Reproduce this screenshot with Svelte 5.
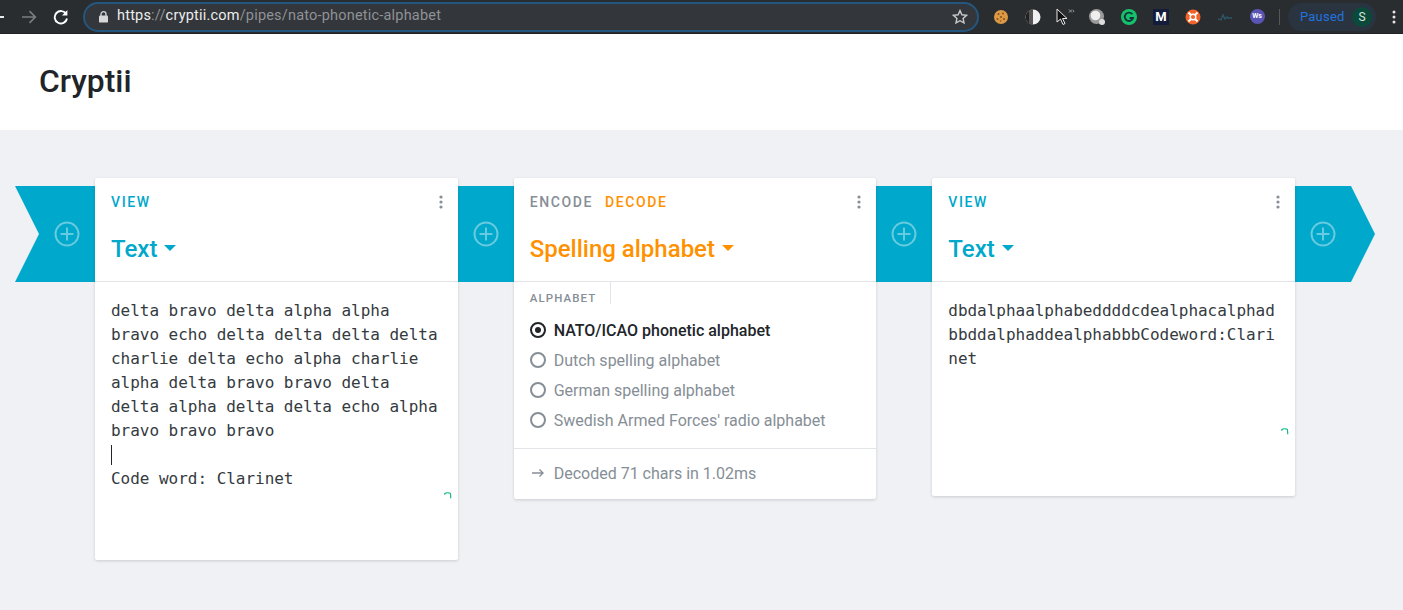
<script>
  const leftLines = [
    'delta bravo delta alpha alpha',
    'bravo echo delta delta delta delta',
    'charlie delta echo alpha charlie',
    'alpha delta bravo bravo delta',
    'delta alpha delta delta echo alpha',
    'bravo bravo bravo'
  ];
  const rightText = 'dbdalphaalphabeddddcdealphacalphadbbddalphaddealphabbbCodeword:Clarinet';
  const alphabets = [
    "Dutch spelling alphabet",
    "German spelling alphabet",
    "Swedish Armed Forces' radio alphabet"
  ];
</script>

{#snippet plus()}
  <svg class="plus" width="26" height="26" viewBox="0 0 26 26" fill="none" stroke="#fff" stroke-opacity=".4" stroke-width="2">
    <circle cx="13" cy="13" r="11.5" />
    <path d="M13 6.5v13M6.5 13h13" />
  </svg>
{/snippet}

{#snippet dots()}
  <svg class="dots" width="4" height="14" viewBox="0 0 4 14" fill="#868e96">
    <circle cx="2" cy="2" r="1.6" /><circle cx="2" cy="7" r="1.6" /><circle cx="2" cy="12" r="1.6" />
  </svg>
{/snippet}

{#snippet spinner()}
  <svg class="spinner" width="8" height="8" viewBox="0 0 8 8" fill="none" stroke="#12b886" stroke-width="1.200">
    <path d="M.8 2.800V1.500C1.800.8 4.800.6 6.200 1.200c.5.4.5 1 .5 5" />
  </svg>
{/snippet}

<div class="toolbar">
  <svg class="nav" width="14" height="14" viewBox="0 0 14 14" fill="none" stroke="#fff" stroke-width="1.8"><path d="M-6 7h10" /></svg>
  <svg class="nav fwd" width="16" height="14" viewBox="0 0 16 14" fill="none" stroke="#7b7d80" stroke-width="1.7"><path d="M1 7h13M8.5 1.2 14.3 7l-5.8 5.8" /></svg>
  <svg class="nav reload" width="16" height="16" viewBox="0 0 16 16" fill="none" stroke="#fff" stroke-width="1.9"><path d="M13.3 5.2A6.2 6.2 0 1 0 14 9.5" /><path d="M14.4 1v5.4H9z" fill="#fff" stroke="none" /></svg>
  <div class="omnibox">
    <svg width="9" height="12" viewBox="0 0 9 12" fill="#d5d6d7"><rect y="4.6" width="9" height="7" rx="1.2" /><path d="M2 5V3.2a2.5 2.5 0 0 1 5 0V5" fill="none" stroke="#d5d6d7" stroke-width="1.3" /></svg>
    <span class="url"><b>https</b><i>://</i><b>cryptii.com</b><i>/pipes/nato-phonetic-alphabet</i></span>
    <svg class="star" width="16" height="16" viewBox="0 0 16 16" fill="none" stroke="#c8c9ca" stroke-width="1.4"><path d="M8 1.6l1.9 4.2 4.6.5-3.4 3.1.9 4.5L8 11.7l-4 2.2.9-4.5L1.500 6.300l4.600-.5z" /></svg>
  </div>
  <div class="extensions">
    <span class="ext"><svg width="16" height="16" viewBox="0 0 16 16"><circle cx="8" cy="8" r="7" fill="#dd9a45" /><g fill="#8a5320"><circle cx="5.500" cy="5" r="1.100" /><circle cx="10" cy="4.500" r="1" /><circle cx="8" cy="8" r="1.100" /><circle cx="4.500" cy="10" r="1" /><circle cx="11" cy="10" r="1.100" /><circle cx="7.500" cy="12" r=".8" /></g></svg></span>
    <span class="ext"><svg width="16" height="16" viewBox="0 0 16 16"><circle cx="8" cy="8" r="7.500" fill="#f1f1f1" /><path d="M8 .5a7.500 7.500 0 0 0 0 15z" fill="#222" /><path d="M8 .5a7.500 7.500 0 0 0-4 1.200v12.600a7.500 7.500 0 0 0 4 1.200z" fill="#555" /></svg></span>
    <span class="ext cursor"><svg width="20" height="18" viewBox="0 0 20 18" fill="#111" stroke="#e8e8e8" stroke-width="1"><path d="M2 1v13l3.500-3 2.500 5.500 2-1-2.500-5H12z" /><path d="M14 1.500l3 3M17 1.500l-3 3M18 2l1 2" stroke="#999" fill="none" /></svg></span>
    <span class="ext"><svg width="16" height="16" viewBox="0 0 16 16"><circle cx="7.500" cy="7.500" r="7.500" fill="#9a9a9a" /><circle cx="6.500" cy="6.500" r="4.800" fill="#eee" /><circle cx="13" cy="13" r="3" fill="#ddd" /></svg></span>
    <span class="ext"><svg width="16" height="16" viewBox="0 0 16 16"><circle cx="8" cy="8" r="8" fill="#15c26b" /><path d="M11.300 5.200A4.200 4.200 0 1 0 12 9H8.600" fill="none" stroke="#10343a" stroke-width="1.900" /></svg></span>
    <span class="ext"><span class="medium">M</span></span>
    <span class="ext"><svg width="16" height="16" viewBox="0 0 16 16"><circle cx="8" cy="8" r="7.500" fill="#f2632b" /><circle cx="8" cy="8" r="2.800" fill="none" stroke="#fff" stroke-width="1.400" /><path d="M3.500 3.500l2.500 2.500M12.500 3.500 10 6M3.500 12.500 6 10M12.500 12.500 10 10" stroke="#fff" stroke-width="2" /></svg></span>
    <span class="ext"><svg width="14" height="10" viewBox="0 0 14 10" fill="none" stroke="#2c5666" stroke-width="1.400"><path d="M0 7l3 1 2-5 2 4 2-2 1 1h4" /></svg></span>
    <span class="ext"><span class="ws">Ws</span></span>
  </div>
  <span class="divider"></span>
  <div class="paused">
    <span>Paused</span>
    <span class="avatar">S</span>
  </div>
  <svg class="kebab" width="4" height="14" viewBox="0 0 4 14" fill="#e6e6e6"><circle cx="2" cy="2" r="1.500" /><circle cx="2" cy="7" r="1.500" /><circle cx="2" cy="12" r="1.500" /></svg>
</div>

<header class="site-header">
  <h1>Cryptii</h1>
</header>

<main class="pipe">
  <div class="connector first">{@render plus()}</div>

  <section class="card text-card tall">
    <div class="card-head">
      <div class="tabs"><span class="tab teal">View</span>{@render dots()}</div>
      <div class="title teal">Text <span class="caret"></span></div>
    </div>
    <div class="editor">
      {#each leftLines as line}
        <div>{line}</div>
      {/each}
      <div class="blank"><span class="text-cursor"></span></div>
      <div>Code word: Clarinet</div>
    </div>
    {@render spinner()}
  </section>

  <div class="connector">{@render plus()}</div>

  <section class="card middle">
    <div class="card-head">
      <div class="tabs">
        <span class="tab">Encode</span><span class="tab orange">Decode</span>
        {@render dots()}
      </div>
      <div class="title orange">Spelling alphabet <span class="caret"></span></div>
    </div>
    <div class="settings">
      <div class="field-label">Alphabet</div>
      <div class="options">
        <div class="option selected"><span class="radio"></span>NATO/ICAO phonetic alphabet</div>
        {#each alphabets as name}
          <div class="option"><span class="radio"></span>{name}</div>
        {/each}
      </div>
    </div>
    <div class="status">
      <svg width="12" height="10" viewBox="0 0 12 10" fill="none" stroke="#868e96" stroke-width="1.400"><path d="M0 5h11M7.500 1.500 11 5 7.500 8.500" /></svg>
      <span>Decoded 71 chars in 1.02ms</span>
    </div>
  </section>

  <div class="connector">{@render plus()}</div>

  <section class="card text-card short">
    <div class="card-head">
      <div class="tabs"><span class="tab teal">View</span>{@render dots()}</div>
      <div class="title teal">Text <span class="caret"></span></div>
    </div>
    <div class="editor broken">{rightText}</div>
    {@render spinner()}
  </section>

  <div class="connector last">{@render plus()}</div>
</main>

<style>
  :global(body) {
    margin: 0;
    background: #eff1f5;
    font-family: Roboto, "Liberation Sans", sans-serif;
    color: #212529;
  }

  .toolbar {
    height: 33px;
    background: #2a2d30;
    border-bottom: 1px solid #1f2123;
    display: flex;
    align-items: center;
    overflow: hidden;
  }
  .nav { flex: none; }
  .fwd { margin-left: 7px; }
  .reload { margin-left: 16px; }
  .omnibox {
    flex: none;
    box-sizing: border-box;
    width: 896px;
    height: 30px;
    margin-left: 14px;
    padding: 0 9px 0 14px;
    background: #33363a;
    border: 2px solid #24577f;
    border-radius: 15px;
    display: flex;
    align-items: center;
  }
  .url {
    margin-left: 9px;
    font-size: 14.5px;
    letter-spacing: .2px;
    white-space: nowrap;
    position: relative;
    top: -1px;
  }
  .url b { font-weight: 400; color: #eceded; }
  .url i { font-style: normal; color: #8f9296; }
  .star { margin-left: auto; }
  .extensions { display: flex; margin-left: 6px; }
  .ext {
    width: 32px;
    height: 20px;
    display: flex;
    align-items: center;
    justify-content: center;
  }
  .medium {
    width: 16px;
    height: 16px;
    background: #141c3c;
    color: #fff;
    font-size: 13px;
    font-weight: 700;
    line-height: 16px;
    text-align: center;
  }
  .ws {
    width: 15px;
    height: 15px;
    border-radius: 50%;
    background: #5a55b5;
    color: #fff;
    font-size: 7px;
    font-weight: 700;
    line-height: 15px;
    text-align: center;
  }
  .divider {
    width: 1px;
    height: 16px;
    margin-left: 6px;
    background: #55585b;
  }
  .paused {
    box-sizing: border-box;
    width: 88px;
    height: 28px;
    margin-left: 8px;
    padding: 0 4px 0 12px;
    border-radius: 14px;
    background: #2a3441;
    color: #2273de;
    font-size: 13px;
    letter-spacing: .2px;
    display: flex;
    align-items: center;
    justify-content: space-between;
  }
  .avatar {
    width: 20px;
    height: 20px;
    border-radius: 50%;
    background: #0b4a3a;
    color: #d6e5df;
    font-size: 12px;
    line-height: 20px;
    text-align: center;
    letter-spacing: 0;
  }
  .kebab { margin-left: 16px; flex: none; }

  .site-header {
    height: 96px;
    background: #fff;
    padding-left: 39px;
    display: flex;
    align-items: center;
  }
  h1 {
    margin: 0;
    font-size: 31.8px;
    font-weight: 500;
    position: relative;
    top: -1px;
  }

  .pipe {
    display: flex;
    align-items: flex-start;
    padding: 48px 0 48px 15px;
    min-height: 384px;
  }
  .connector {
    flex: none;
    box-sizing: border-box;
    width: 56px;
    height: 96px;
    margin-top: 8px;
    background: #00a8cb;
    display: flex;
    align-items: center;
    justify-content: center;
  }
  .connector.first {
    width: 80px;
    padding-left: 24px;
    clip-path: polygon(0 0, 100% 0, 100% 100%, 0 100%, 24px 50%);
  }
  .connector.last {
    width: 80px;
    padding-right: 24px;
    clip-path: polygon(0 0, 56px 0, 100% 50%, 56px 100%, 0 100%);
  }

  .card {
    flex: none;
    position: relative;
    z-index: 1;
    width: 362.67px;
    background: #fff;
    border-radius: 2px;
    box-shadow: 0 1px 3px rgba(33, 37, 41, .18);
  }
  .card.tall { height: 382px; }
  .card.middle { height: 321px; display: flex; flex-direction: column; }
  .card.short { height: 318px; }

  .card-head {
    box-sizing: border-box;
    height: 104px;
    padding: 16px 16px 0;
    border-bottom: 1px solid #e2e4e7;
  }
  .tabs {
    display: flex;
    align-items: center;
    height: 16px;
  }
  .tab {
    font-size: 14px;
    font-weight: 500;
    letter-spacing: 1.6px;
    text-transform: uppercase;
    color: #868e96;
    margin-right: 12px;
  }
  .dots { margin-left: auto; margin-right: -1px; }
  .teal, .tab.teal { color: #00a8cb; }
  .orange, .tab.orange { color: #ff9100; }
  .title {
    margin-top: 24px;
    font-size: 24px;
    font-weight: 500;
    line-height: 30px;
    display: flex;
    align-items: center;
    white-space: pre;
  }
  .caret {
    width: 0;
    height: 0;
    margin-left: 1px;
    margin-top: -2px;
    border-left: 6.5px solid transparent;
    border-right: 6.5px solid transparent;
    border-top: 6px solid currentColor;
  }

  .editor {
    padding: 17px 16px 15px;
    font-family: "DejaVu Sans Mono", "Liberation Mono", monospace;
    font-size: 16px;
    letter-spacing: -.03px;
    line-height: 24px;
    color: #343a40;
  }
  .editor.broken { word-break: break-all; }
  .blank { height: 24px; }
  .text-cursor {
    display: block;
    width: 1px;
    height: 20px;
    position: relative;
    top: 2px;
    background: #212529;
  }
  .spinner {
    position: absolute;
    right: 6px;
    bottom: 60px;
  }

  .settings { flex: 1; }
  .field-label {
    box-sizing: border-box;
    width: 97px;
    height: 22px;
    padding: 11px 0 0 16px;
    border-right: 1px solid #e2e4e7;
    font-size: 11.5px;
    font-weight: 500;
    line-height: 11px;
    letter-spacing: 1.1px;
    text-transform: uppercase;
    color: #868e96;
  }
  .options { padding-top: 11px; }
  .option {
    height: 30px;
    padding-left: 16px;
    display: flex;
    align-items: center;
    gap: 8px;
    font-size: 16px;
    color: #868e96;
  }
  .option.selected { color: #212529; font-weight: 500; }
  .radio {
    box-sizing: border-box;
    flex: none;
    width: 16px;
    height: 16px;
    border: 2px solid #868e96;
    border-radius: 50%;
    display: flex;
    align-items: center;
    justify-content: center;
  }
  .selected .radio { border-color: #212529; }
  .selected .radio::after {
    content: '';
    width: 6px;
    height: 6px;
    border-radius: 50%;
    background: #212529;
  }
  .status {
    box-sizing: border-box;
    height: 51px;
    padding: 0 0 2px 18px;
    border-top: 1px solid #e2e4e7;
    display: flex;
    align-items: center;
    gap: 10px;
    font-size: 16px;
    color: #868e96;
  }
</style>
